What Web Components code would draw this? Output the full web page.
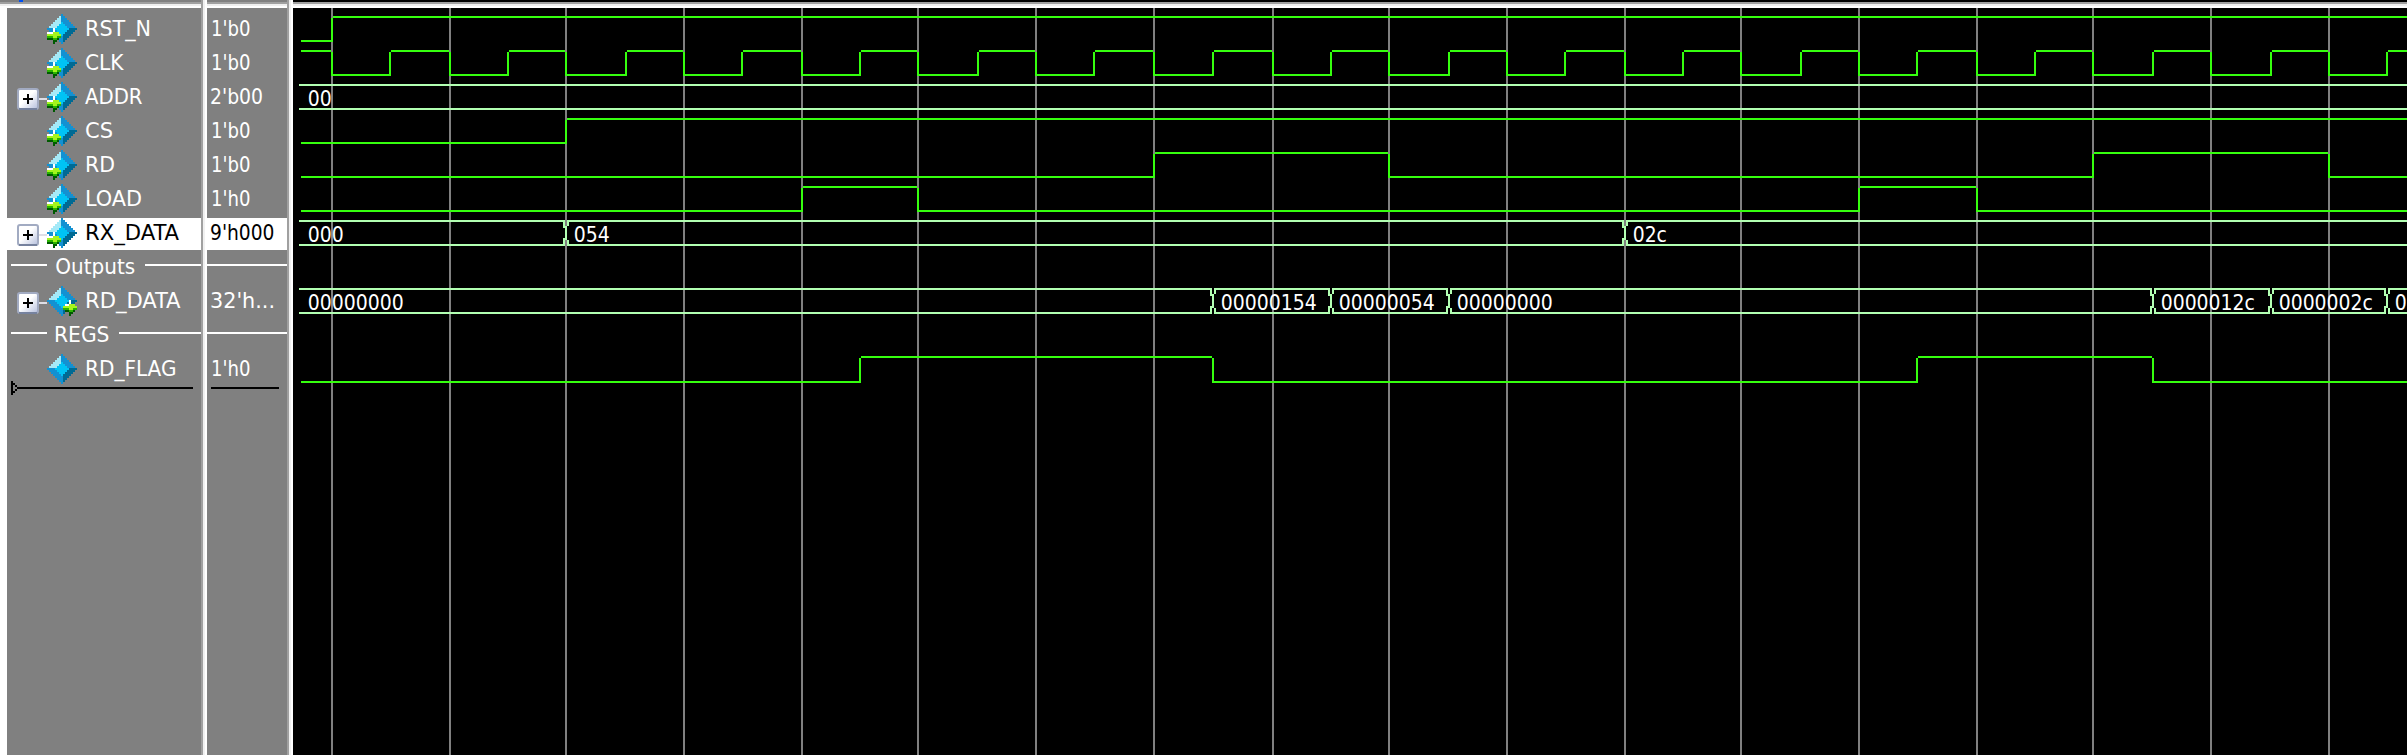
<!DOCTYPE html>
<html lang="en">
<head>
<meta charset="utf-8">
<title>Wave</title>
<style>
html,body{margin:0;height:100%;overflow:hidden;background:#fff}
body{font:22px "DejaVu Sans Condensed","DejaVu Sans",sans-serif}
</style>
</head>
<body>
<wave-window></wave-window>
<script>
const CELL = 2;
const px = (x, y, c, w = 1, h = 1) => `<rect x="${x * CELL}" y="${y * CELL}" width="${w * CELL}" height="${h * CELL}" fill="${c}"/>`;
const FONT = `text{font-family:"DejaVu Sans Condensed","DejaVu Sans",sans-serif;font-stretch:condensed;font-size:22px}`;
const label = (x, y, len, s, fill) => `<text x="${x}" y="${y}" textLength="${len}" lengthAdjust="spacingAndGlyphs" fill="${fill}">${s}</text>`;

// Faceted signal diamond with an optional port arrow: kind = in | out | reg
class SignalIcon extends HTMLElement {
  connectedCallback() {
    let s = '';
    for (let y = -7; y <= 7; y++) for (let x = -7; x <= 7; x++) {
      const d = Math.abs(x) + Math.abs(y);
      if (d > 7) continue;
      let c = '#1391d2';
      if (d <= 3) c = '#00c3f5';
      else if (x <= 0 && y < 0) c = x === 0 ? '#1391d2' : '#a5e9f7';
      else if (x > 0 && y >= 0) c = '#006a94';
      s += px(x + 7, y + 7, c);
    }
    const kind = this.getAttribute('kind');
    if (kind !== 'reg') {
      const o = kind === 'out' ? 8 : 0, n = kind === 'out' ? 1 : 0;
      s += px(o + 3, 7, '#fff') + (n ? '' : px(o + 1, 8, '#1391d2', 2)) + px(o + 3, 8, '#fff')
        + px(o + n, 9, '#fff', 3 - n) + px(o + 3, 9, '#a5f51e', 3)
        + px(o, 10, '#a5f51e', 7) + px(o, 11, '#28b400', 3) + px(o + 3, 11, '#a5f51e', 2) + px(o + 5, 11, '#28b400', 2)
        + px(o + n, 12, '#005a00', 3 - n) + px(o + 3, 12, '#28b400', 2) + px(o + 5, 12, '#005a00')
        + px(o + 3, 13, '#005a00', 2) + px(o + 3, 14, '#005a00');
    }
    this.attachShadow({mode: 'open'}).innerHTML = `<style>:host{display:block;width:30px;height:30px}svg{display:block}</style><svg width="30" height="30" shape-rendering="crispEdges">${s}</svg>`;
  }
}
customElements.define('signal-icon', SignalIcon);

class ExpandBox extends HTMLElement {
  connectedCallback() {
    this.attachShadow({mode: 'open'}).innerHTML = `<style>:host{display:block;width:30px;height:30px}svg{display:block}</style>
    <svg width="30" height="30"><defs><linearGradient id="g" x1="0" y1="0" x2="1" y2="1"><stop offset=".45" stop-color="#fff"/><stop offset="1" stop-color="#b4bedc"/></linearGradient></defs>
    <rect x="1" y="7" width="20" height="20" rx="2" fill="url(#g)" stroke="#a2abc2" stroke-width="2"/>
    <g shape-rendering="crispEdges"><rect x="2" y="26" width="18" height="2" fill="#76829e"/><rect x="22" y="16" width="8" height="2" fill="#dedee6"/>
    <rect x="6" y="16" width="10" height="2"/><rect x="10" y="12" width="2" height="10"/></g></svg>`;
  }
}
customElements.define('expand-box', ExpandBox);

class SignalRow extends HTMLElement {
  connectedCallback() {
    const a = n => this.getAttribute(n), sel = this.hasAttribute('selected');
    this.attachShadow({mode: 'open'}).innerHTML = `<style>${FONT}
    :host{display:flex;height:32px;margin-bottom:2px;padding-left:10px;background:${sel ? '#fff' : 'none'}}
    .box{width:30px}svg{display:block;overflow:visible}</style>
    <div class="box">${this.hasAttribute('bus') ? '<expand-box></expand-box>' : ''}</div>
    <signal-icon kind="${a('kind')}"></signal-icon>
    <svg width="110" height="32">${label(8, 22, a('len'), a('name'), sel ? '#000' : '#fff')}</svg>`;
  }
}
customElements.define('signal-row', SignalRow);

class ValueRow extends HTMLElement {
  connectedCallback() {
    const sel = this.hasAttribute('selected');
    this.attachShadow({mode: 'open'}).innerHTML = `<style>${FONT}
    :host{display:block;height:32px;margin-bottom:2px;background:${sel ? '#fff' : 'none'}}svg{display:block}</style>
    <svg width="80" height="32">${label(this.getAttribute('x') || 4, 22, this.getAttribute('len'), this.getAttribute('value'), sel ? '#000' : '#fff')}</svg>`;
  }
}
customElements.define('value-row', ValueRow);

class DividerRow extends HTMLElement {
  connectedCallback() {
    const n = this.getAttribute('name'), w = this.getAttribute('gap');
    this.attachShadow({mode: 'open'}).innerHTML = `<style>${FONT}
    :host{display:flex;height:32px;margin-bottom:2px}
    i{height:2px;margin-top:12px;background:#fff}.l{width:36px;margin-left:4px}.r{flex:1}svg{display:block}</style>
    ${n ? `<i class="l"></i><svg width="${w}" height="32">${label(this.getAttribute('x'), 22, this.getAttribute('len'), n, '#fff')}</svg>` : ''}<i class="r"></i>`;
  }
}
customElements.define('divider-row', DividerRow);

// Column with a sunken top edge and a right-hand sash
class WavePane extends HTMLElement {
  connectedCallback() {
    this.attachShadow({mode: 'open'}).innerHTML = `<style>
    :host{display:flex;flex-direction:row;height:755px}
    .main{flex:1;display:flex;flex-direction:column;min-width:0}
    .top{height:8px;flex:none;background:linear-gradient(var(--edge,#808080) 0 2px,#a0a0a0 2px 4px,#efefef 4px 6px,#fff 6px)}
    .body{flex:1;background:var(--fill,#808080);margin-left:var(--inset,0);padding-top:var(--pad,6px);box-sizing:border-box;overflow:hidden}
    .sash{width:var(--sash,6px);background:linear-gradient(90deg,#a0a0a0 0 2px,#f0f0f0 2px 4px,#fff 4px)}
    </style><div class="main"><div class="top"><slot name="top"></slot></div><div class="body"><slot></slot></div></div><div class="sash"></div>`;
  }
}
customElements.define('wave-pane', WavePane);

const FALL = [332,450,566,684,802,918,1036,1154,1273,1389,1507,1625,1741,1859,1977,2093,2211,2329];
const RISE = [390,508,626,742,860,978,1094,1213,1331,1449,1565,1683,1801,1917,2035,2153,2271,2387];
const X0 = 293, Y0 = 8, END = 2408;

class WaveCanvas extends HTMLElement {
  connectedCallback() {
    const r = (x, y, w, h, c) => `<rect x="${x - X0}" y="${y - Y0}" width="${w}" height="${h}" fill="${c}"/>`;
    let s = FALL.map(x => r(x - 1, 8, 2, 747, '#808080')).join('');
    const G = '#35ff0e', B = '#b2ffb2';
    const scalar = (hi, lo, level, edges) => {
      let x = 301;
      for (const e of [...edges, null]) {
        const stop = e === null ? END : (level ? e - 1 : e + 1);
        s += r(x, (level ? hi : lo) - 1, stop - x, 2, G);
        if (e === null) break;
        s += r(e - 1, hi + 1, 2, lo - hi, G);
        level = !level;
        x = level ? e + 1 : e - 1;
      }
    };
    const bus = (top, edges, words) => {
      const bot = top + 24;
      let x = 299;
      for (const e of [...edges, END + 3]) {
        s += r(x, top - 1, e - 1 - x, 2, B) + r(x, bot - 1, e - 1 - x, 2, B);
        if (e < END) {
          s += r(e - 3, top - 1, 2, 8, B) + r(e - 3, bot - 7, 2, 8, B)
            + r(e - 1, top + 5, 2, 14, B)
            + r(e + 1, top - 1, 2, 6, B) + r(e + 1, bot - 5, 2, 6, B);
        }
        x = e + 1;
      }
      [300, ...edges].forEach((e, i) => {
        const w = words[i], len = w.length * 12 - (w.endsWith('c') ? 1.8 : 0);
        s += label(e + 7.7 - X0, top + 21 - Y0, len, w, '#fff');
      });
    };
    scalar(17, 41, false, [332]);
    scalar(51, 75, true, FALL.flatMap((f, i) => [f, RISE[i]]));
    bus(85, [], ['00']);
    scalar(119, 143, false, [566]);
    scalar(153, 177, false, [1154, 1389, 2093, 2329]);
    scalar(187, 211, false, [802, 918, 1859, 1977]);
    bus(221, [566, 1625], ['000', '054', '02c']);
    bus(289, [1213, 1331, 1449, 2153, 2271, 2387], ['00000000', '00000154', '00000054', '00000000', '0000012c', '0000002c', '0']);
    scalar(357, 382, false, [860, 1213, 1917, 2153]);
    this.attachShadow({mode: 'open'}).innerHTML = `<style>${FONT}:host{display:block}svg{display:block}rect{shape-rendering:crispEdges}</style><svg width="2115" height="747">${s}</svg>`;
  }
}
customElements.define('wave-canvas', WaveCanvas);

// Insertion marker below the last signal
class EndMark extends HTMLElement {
  connectedCallback() {
    const v = this.hasAttribute('plain');
    this.attachShadow({mode: 'open'}).innerHTML = `<style>:host{display:block;margin-top:-7px}svg{display:block}</style>
    <svg width="190" height="14" shape-rendering="crispEdges">${v ? '<rect x="4" y="6" width="68" height="2"/>' :
      '<rect x="10" y="6" width="176" height="2"/><path d="M4 0h2v14h-2zM6 2h2v2h-2zM8 4h2v2h-2zM8 8h2v2h-2zM6 10h2v2h-2z"/>'}</svg>`;
  }
}
customElements.define('end-mark', EndMark);

class WaveWindow extends HTMLElement {
  connectedCallback() {
    this.attachShadow({mode: 'open'}).innerHTML = `<style>
    :host{display:grid;grid-template-columns:207px 86px 2114px;height:755px;background:#fff}
    .names{--inset:7px}.wave{--edge:#000;--fill:#000;--pad:0;--sash:0px}
    .dot{width:4px;height:2px;margin-left:19px;background:#0050f0}
    </style>
    <wave-pane class="names"><div slot="top" class="dot"></div>
      <signal-row kind="in" name="RST_N" len="66"></signal-row>
      <signal-row kind="in" name="CLK" len="38.5"></signal-row>
      <signal-row kind="in" bus name="ADDR" len="57.5"></signal-row>
      <signal-row kind="in" name="CS" len="28"></signal-row>
      <signal-row kind="in" name="RD" len="30"></signal-row>
      <signal-row kind="in" name="LOAD" len="57"></signal-row>
      <signal-row kind="in" bus selected name="RX_DATA" len="94"></signal-row>
      <divider-row name="Outputs" x="8.2" len="80" gap="98"></divider-row>
      <signal-row kind="out" bus name="RD_DATA" len="95.5"></signal-row>
      <divider-row name="REGS" x="7" len="55.5" gap="72"></divider-row>
      <signal-row kind="reg" name="RD_FLAG" len="91.5"></signal-row>
      <end-mark></end-mark>
    </wave-pane>
    <wave-pane>
      <value-row value="1'b0" len="39.5"></value-row>
      <value-row value="1'b0" len="39.5"></value-row>
      <value-row value="2'b00" x="3" len="53"></value-row>
      <value-row value="1'b0" len="39.5"></value-row>
      <value-row value="1'b0" len="39.5"></value-row>
      <value-row value="1'h0" len="39.5"></value-row>
      <value-row selected value="9'h000" x="3" len="64.5"></value-row>
      <divider-row></divider-row>
      <value-row value="32'h..." x="3" len="65"></value-row>
      <divider-row></divider-row>
      <value-row value="1'h0" len="39.5"></value-row>
      <end-mark plain></end-mark>
    </wave-pane>
    <wave-pane class="wave"><wave-canvas></wave-canvas></wave-pane>`;
  }
}
customElements.define('wave-window', WaveWindow);
</script>
</body>
</html>
